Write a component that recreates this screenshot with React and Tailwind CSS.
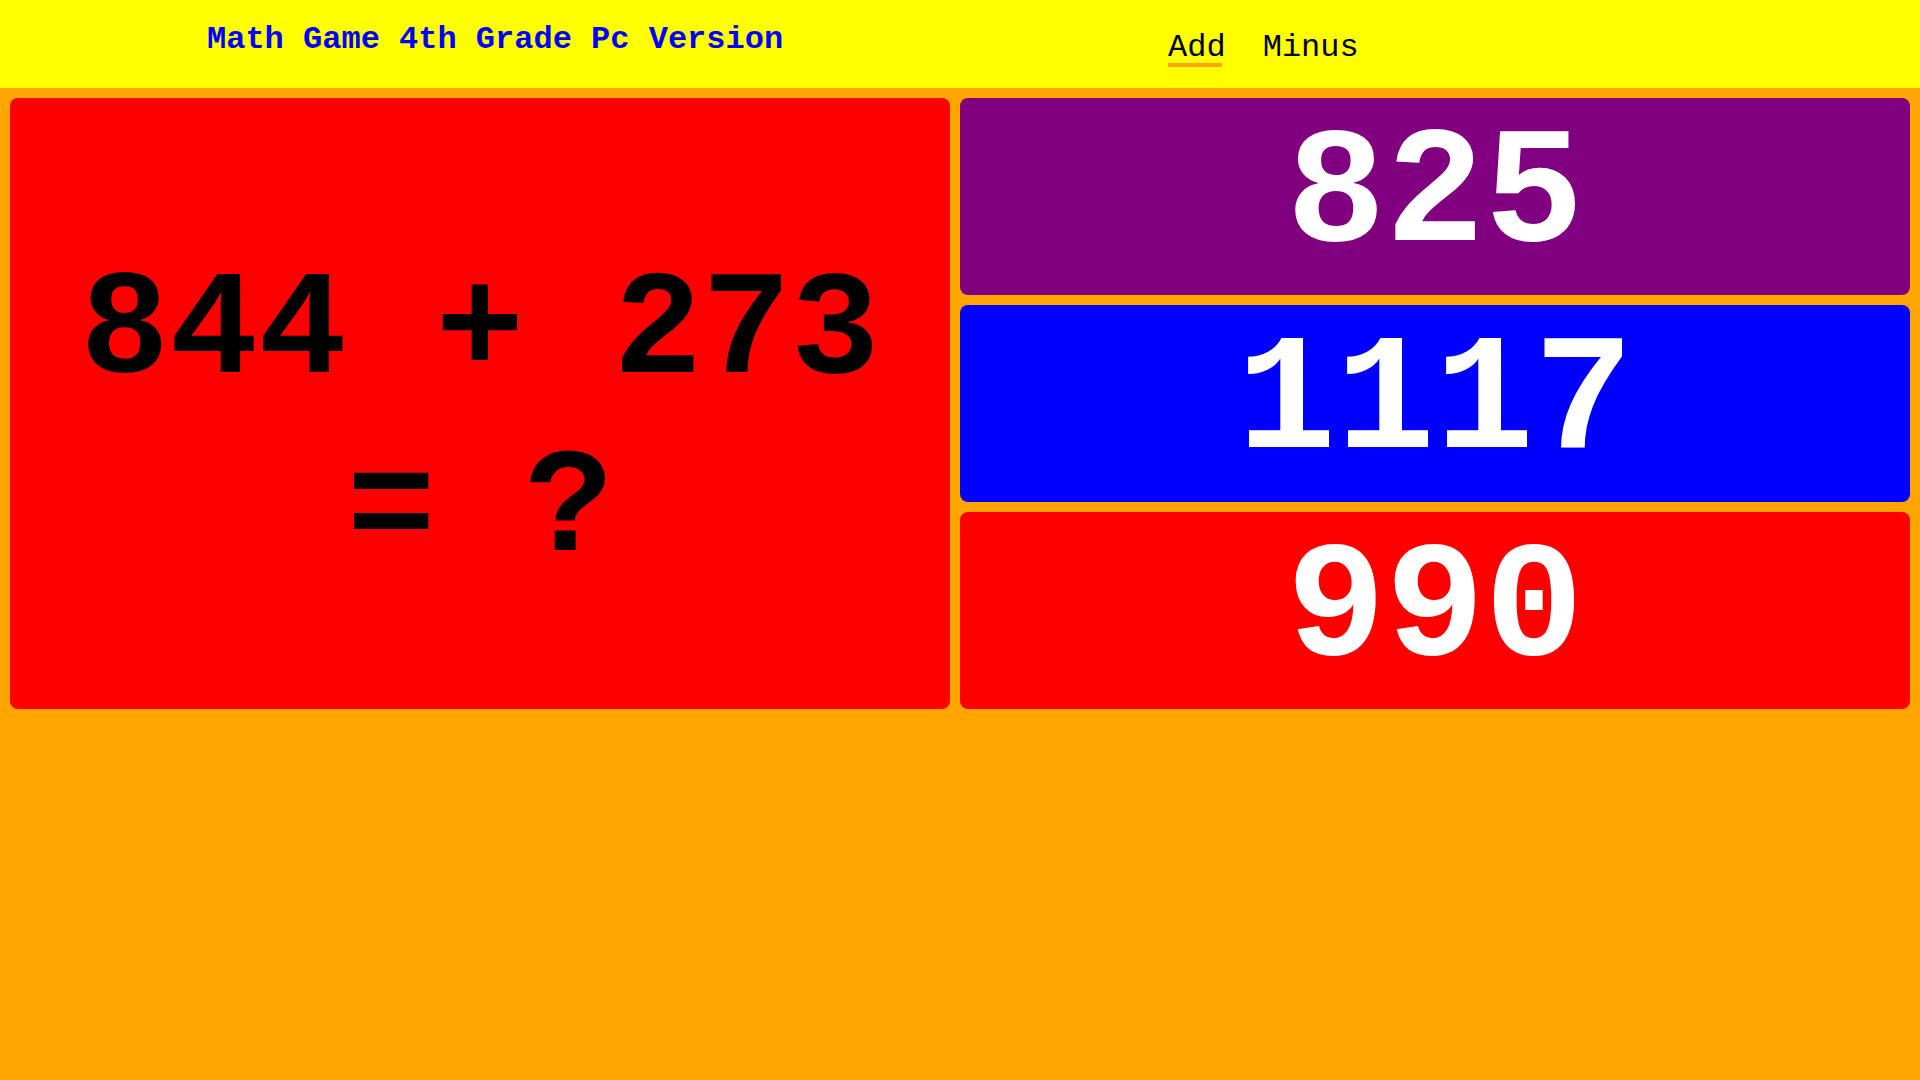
import React from "react";

const mono = { fontFamily: '"Liberation Mono", "Courier New", monospace' };

export default function App() {
  return (
    <div className="min-h-screen w-full bg-[#ffa500]" style={mono}>
      <header className="flex h-[88px] items-start bg-[#ffff00]">
        <h1 className="ml-[207px] mt-[22px] text-[32px] font-bold leading-[36px] text-[#0000ff]">
          Math Game 4th Grade Pc Version
        </h1>
        <nav className="ml-[385px] mt-[30px] flex gap-[37px] text-[32px] leading-[36px] text-black">
          <span className="relative">
            Add
            <span className="absolute left-0 top-[33px] h-[4px] w-[54px] bg-[#ffa500]"></span>
          </span>
          <span>Minus</span>
        </nav>
      </header>

      <main className="flex gap-[10px] px-[10px] pt-[10px]">
        <div className="flex h-[611px] w-[940px] items-start justify-center rounded-lg bg-[#ff0000] pt-[146px]">
          <p className="text-center text-[148px] font-bold leading-[178px] text-black">
            844 + 273 = ?
          </p>
        </div>
        <div className="flex flex-1 flex-col gap-[10px]">
          <div className="flex h-[197px] items-center justify-center overflow-hidden rounded-lg bg-[#800080]">
            <span className="text-[165px] font-bold leading-[198px] text-white">825</span>
          </div>
          <div className="flex h-[197px] items-center justify-center overflow-hidden rounded-lg bg-[#0000ff]">
            <span className="text-[165px] font-bold leading-[198px] text-white">1117</span>
          </div>
          <div className="flex h-[197px] items-center justify-center overflow-hidden rounded-lg bg-[#ff0000]">
            <span className="text-[165px] font-bold leading-[198px] text-white">990</span>
          </div>
        </div>
      </main>
    </div>
  );
}
